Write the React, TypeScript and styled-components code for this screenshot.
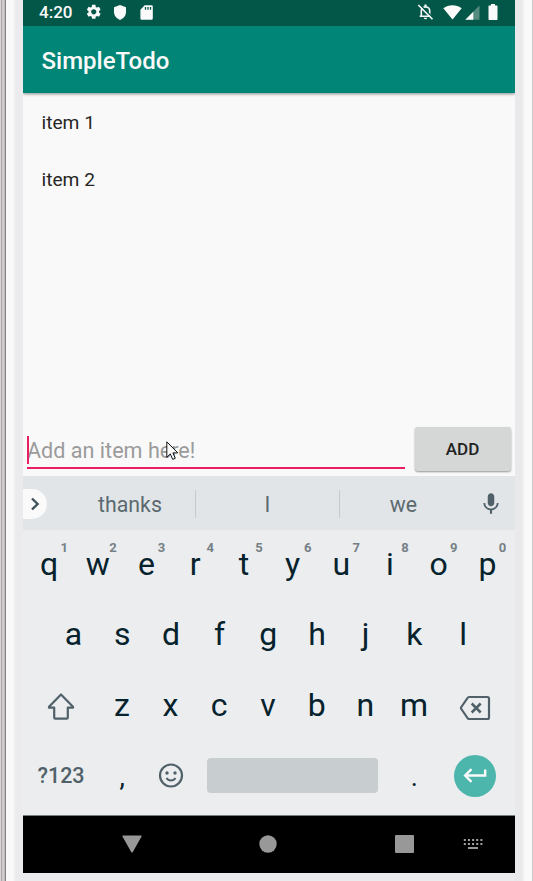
import React from "react";
import styled, { createGlobalStyle } from "styled-components";
import { MdSettings, MdMic, MdKeyboardReturn } from "react-icons/md";

const GlobalStyle = createGlobalStyle`
  html, body { margin: 0; padding: 0; }
  body { background: #f9f9f9; overflow: hidden; font-family: Roboto, "Liberation Sans", sans-serif; }
  * { box-sizing: border-box; }
`;

const Frame = styled.div`
  display: flex;
  width: 533px;
  height: 881px;
  overflow: hidden;
`;

const LeftEdge = styled.div`
  flex: none;
  width: 23px;
  background: linear-gradient(
    to right,
    #dcd8da 0 1px,
    #a9a5a7 1px 2px,
    #d0cbce 2px 4px,
    #c0bbbd 4px 5px,
    #858183 5px 6px,
    #f9f9f9 6px 14px,
    #efeff1 14px 16px,
    #ebebed 16px 23px
  );
`;

const RightEdge = styled.div`
  flex: none;
  width: 18px;
  background: linear-gradient(
    to right,
    #e9e9eb 0 7px,
    #efeff0 7px 9px,
    #f9f9f9 9px 17px,
    #c9c9c9 17px 18px
  );
`;

const Screen = styled.main`
  width: 492px;
  display: flex;
  flex-direction: column;
  background: #ebebed;
`;

const StatusBar = styled.header`
  height: 26px;
  flex: none;
  display: flex;
  justify-content: space-between;
  background: #025748;
  color: #fafafa;
  padding: 0 17.5px 0 16px;
`;

const StatusGroup = styled.div`
  display: flex;
  align-items: center;
  height: 24px;
`;

const Clock = styled.span`
  width: 46px;
  font-size: 17px;
  font-weight: 500;
  line-height: 24px;
`;

const Glyph = styled.svg<{ $gap?: number; $drop?: number }>`
  flex: none;
  display: block;
  margin-left: ${(p) => p.$gap ?? 0}px;
  margin-top: ${(p) => p.$drop ?? 0}px;
`;

const AppBar = styled.div`
  height: 67px;
  flex: none;
  padding-left: 18.5px;
  background: #018576;
  color: #fafafa;
  font-size: 24px;
  font-weight: 500;
  line-height: 70px;
  box-shadow: 0 1px 3px rgba(0, 0, 0, 0.45);
  z-index: 1;
  clip-path: inset(0 0 -6px 0);
`;

const Content = styled.section`
  height: 383px;
  flex: none;
  display: flex;
  flex-direction: column;
  background: #f9f9f9;
`;

const List = styled.ul`
  flex: 1;
  list-style: none;
  margin: 0;
  padding: 0.5px 0 0 18.5px;
`;

const Item = styled.li`
  height: 57.5px;
  line-height: 57.5px;
  font-size: 19.2px;
  color: #262626;
`;

const Entry = styled.div`
  display: flex;
  height: 50px;
  padding-left: 4px;
`;

const Field = styled.div`
  position: relative;
  width: 378px;
  height: 43px;
  border-bottom: 2px solid #e91e63;
  color: #9b9b9b;
  font-size: 21.6px;
  line-height: 50px;
  white-space: nowrap;
`;

const Caret = styled.i`
  position: absolute;
  left: 0;
  top: 10px;
  width: 2px;
  height: 28px;
  background: #e91e63;
`;

const Pointer = styled.svg`
  position: absolute;
  left: 139px;
  top: 15px;
`;

const AddButton = styled.button`
  margin: 1px 0 0 9.5px;
  width: 96px;
  height: 44px;
  padding: 0 0 1px;
  border: 0;
  border-radius: 3px;
  background: #d5d7d6;
  box-shadow: 0 1px 2px rgba(0, 0, 0, 0.4);
  color: #222;
  font: 500 17px Roboto, sans-serif;
`;

const Suggestions = styled.div`
  height: 53.5px;
  flex: none;
  display: flex;
  align-items: center;
  background: #e1e5e8;
  color: #5b696f;
  font-size: 21.3px;
`;

const Expand = styled.div`
  flex: none;
  width: 24px;
  height: 30px;
  margin-top: 2px;
  display: flex;
  align-items: center;
  padding-left: 7px;
  border-radius: 0 15px 15px 0;
  background: #fafafa;
`;

const Suggestion = styled.span<{ $width: number; $shift?: number; $divided?: boolean }>`
  flex: none;
  width: ${(p) => p.$width}px;
  height: 28px;
  margin-top: 1.5px;
  padding-left: ${(p) => p.$shift ?? 0}px;
  line-height: 29.5px;
  text-align: center;
  border-right: ${(p) => (p.$divided ? "1px solid #c3c9cc" : "0")};
`;

const Mic = styled.span`
  display: flex;
  margin-left: 11px;
  margin-top: 2px;
  color: #50616a;
`;

const Keyboard = styled.section`
  height: 286.5px;
  flex: none;
  padding-left: 1.7px;
  background: #ebedef;
  border-bottom: 1px solid #777e80;
`;

const KeyRow = styled.div<{ $indent?: number }>`
  display: flex;
  height: 70.3px;
  padding-left: ${(p) => p.$indent ?? 0}px;
`;

const Key = styled.div<{ $width?: number }>`
  position: relative;
  width: ${(p) => p.$width ?? 48.7}px;
  height: 70.3px;
  display: flex;
  align-items: center;
  justify-content: center;
  color: #06222c;
  font-size: 32px;
  line-height: 70px;
`;

const LetterKey = styled(Key)`
  height: 69px;
  padding-left: 0.3px;
`;

const Hint = styled.sup`
  position: absolute;
  left: 34.5px;
  top: 10px;
  width: 10px;
  text-align: center;
  color: #758086;
  font-size: 13px;
  font-weight: 700;
  line-height: 16px;
`;

const ModeKey = styled(Key)`
  color: #50616a;
  font-size: 21.5px;
  font-weight: 500;
  line-height: 68px;
`;

const Punctuation = styled(Key)`
  font-size: 27px;
  padding: 3px 0 0 1px;
`;

const SpaceBar = styled.span`
  width: 171px;
  height: 35px;
  border-radius: 4px;
  background: #c8cdd0;
`;

const EnterDisc = styled.span`
  width: 42px;
  height: 42px;
  margin-left: 1px;
  display: grid;
  place-items: center;
  border-radius: 50%;
  background: #4db6ac;
  color: #fafafa;
`;

const NavBar = styled.nav`
  height: 57px;
  flex: none;
  display: flex;
  align-items: center;
  padding-bottom: 1.5px;
  background: #000;
`;

const numbers = "1234567890";

function Letters({ text, hints }: { text: string; hints?: string }) {
  return (
    <>
      {text.split("").map((c, i) => (
        <LetterKey key={c}>
          {c}
          {hints && <Hint>{hints[i]}</Hint>}
        </LetterKey>
      ))}
    </>
  );
}

export default function App() {
  return (
    <>
      <GlobalStyle />
      <Frame>
        <LeftEdge />
        <Screen>
          <StatusBar>
            <StatusGroup>
              <Clock>4:20</Clock>
              <MdSettings size={17.5} />
              <Glyph $gap={10.5} width="14" height="15" viewBox="0 0 14 15">
                <path d="M7 0 13 2.2V7c0 3.6-2.4 6.6-6 7.9C3.4 13.6 1 10.6 1 7V2.2z" fill="currentColor" />
              </Glyph>
              <Glyph $gap={13} width="13" height="15" viewBox="0 0 13 15">
                <path d="M4.7.2H11.5A1.3 1.3 0 0 1 12.8 1.5V13.5A1.3 1.3 0 0 1 11.5 14.8H1.7A1.3 1.3 0 0 1 .4 13.5V4.7z" fill="currentColor" />
                <path d="M5.5 2V4.7M8 2V4.7M10.5 2V4.7" stroke="#025748" strokeWidth="1.3" />
              </Glyph>
            </StatusGroup>
            <StatusGroup>
              <Glyph width="17" height="18" viewBox="0 0 17 18">
                <path d="M4.3 13.3V8C4.3 5.5 5.6 4 8.5 4s4.2 1.5 4.2 4v5.3M2.7 13.3H14.3" fill="none" stroke="currentColor" strokeWidth="1.6" />
                <path d="M8.5 1.5V4" stroke="currentColor" strokeWidth="2.2" />
                <path d="M6.9 14.7H10.1A1.6 1.6 0 0 1 6.9 14.7z" fill="currentColor" />
                <path d="M2.5 1.3 16.7 15.5" stroke="#025748" strokeWidth="1.5" />
                <path d="M1.3 2 15.5 16.3" stroke="currentColor" strokeWidth="1.6" />
              </Glyph>
              <Glyph $gap={9.5} width="19" height="15" viewBox="0 0 19 15">
                <path d="M.3 3.2C5.5-.7 13.5-.7 18.7 3.2L9.5 14.6z" fill="currentColor" />
              </Glyph>
              <Glyph $gap={2.5} width="15" height="15" viewBox="0 0 15 15">
                <path d="M14.5.5V14.7H.3z" fill="#568b7f" />
                <path d="M8.3 6.7V14.7H.3z" fill="currentColor" />
              </Glyph>
              <Glyph $gap={8} width="10" height="16" viewBox="0 0 10 16">
                <path d="M3 0H7V1.5H8.8Q9.5 1.5 9.5 2.2V15.2Q9.5 16 8.8 16H1.2Q.5 16 .5 15.2V2.2Q.5 1.5 1.2 1.5H3z" fill="currentColor" />
              </Glyph>
            </StatusGroup>
          </StatusBar>

          <AppBar>SimpleTodo</AppBar>

          <Content>
            <List>
              <Item>item 1</Item>
              <Item>item 2</Item>
            </List>
            <Entry>
              <Field>
                Add an item here!
                <Caret />
                <Pointer width="13" height="20" viewBox="0 0 13 20">
                  <path d="M.8.8V16.3L4.3 12.9 6.7 18.4 9.3 17.3 6.9 11.9H11.8z" fill="#fafafa" stroke="#111" strokeWidth="1" />
                </Pointer>
              </Field>
              <AddButton>ADD</AddButton>
            </Entry>
          </Content>

          <Suggestions>
            <Expand>
              <Glyph width="11" height="14" viewBox="0 0 11 14">
                <path d="M2 1.5 7.6 7 2 12.5" fill="none" stroke="#40525b" strokeWidth="2.4" />
              </Glyph>
            </Expand>
            <Suggestion $width={149} $shift={18} $divided>thanks</Suggestion>
            <Suggestion $width={144} $divided>I</Suggestion>
            <Suggestion $width={127}>we</Suggestion>
            <Mic><MdMic size={26} /></Mic>
          </Suggestions>

          <Keyboard>
            <KeyRow><Letters text="qwertyuiop" hints={numbers} /></KeyRow>
            <KeyRow $indent={24.4}><Letters text="asdfghjkl" /></KeyRow>
            <KeyRow>
              <Key $width={72.7}>
                <Glyph $drop={2} width="28" height="28" viewBox="0 0 28 28">
                  <path d="M14 2.5 26 14.7V15.7H20.8V25.5Q20.8 26.6 19.7 26.6H8.3Q7.2 26.6 7.2 25.5V15.7H2V14.7z" fill="none" stroke="#50616a" strokeWidth="2.2" strokeLinejoin="round" />
                </Glyph>
              </Key>
              <Letters text="zxcvbnm" />
              <Key $width={73}>
                <Glyph $drop={5} width="32" height="26" viewBox="0 0 32 26">
                  <path d="M10 2H28.5Q30 2 30 3.5V22.5Q30 24 28.5 24H10Q9 24 8.5 23L2 13.5V12.5L8.5 3Q9 2 10 2z" fill="none" stroke="#50616a" strokeWidth="2.2" />
                  <path d="M12.7 8.5 21.7 17.5M21.7 8.5 12.7 17.5" stroke="#50616a" strokeWidth="2.5" />
                </Glyph>
              </Key>
            </KeyRow>
            <KeyRow>
              <ModeKey $width={72.7}>?123</ModeKey>
              <Punctuation>,</Punctuation>
              <Key>
                <Glyph $gap={1} width="26" height="26" viewBox="0 0 26 26">
                  <circle cx="13" cy="12.5" r="11" fill="none" stroke="#50616a" strokeWidth="2.2" />
                  <circle cx="9" cy="10" r="1.7" fill="#50616a" />
                  <circle cx="17" cy="10" r="1.7" fill="#50616a" />
                  <path d="M8.5 15Q10 17.5 13 17.5T17.5 15" fill="none" stroke="#50616a" strokeWidth="2" />
                </Glyph>
              </Key>
              <Key $width={194.8}><SpaceBar /></Key>
              <Punctuation>.</Punctuation>
              <Key $width={73}>
                <EnterDisc><MdKeyboardReturn size={29} /></EnterDisc>
              </Key>
            </KeyRow>
          </Keyboard>

          <NavBar>
            <Glyph $gap={99} width="20" height="18" viewBox="0 0 20 18">
              <path d="M1 .5H19Q20 .5 19.5 1.5L10.8 17Q10 18 9.2 17L.5 1.5Q0 .5 1 .5z" fill="#989898" />
            </Glyph>
            <Glyph $gap={117} width="18" height="18" viewBox="0 0 18 18">
              <circle cx="9" cy="9" r="8.7" fill="#989898" />
            </Glyph>
            <Glyph $gap={118} width="19" height="18" viewBox="0 0 19 18">
              <rect width="19" height="18" rx="1" fill="#989898" />
            </Glyph>
            <Glyph $gap={49} width="20" height="12" viewBox="0 0 20 12">
              <path d="M.8 2H19.5M.8 6H19.5" stroke="#a4a4a4" strokeWidth="2" strokeDasharray="2 2.15" />
              <path d="M5 10H15" stroke="#989898" strokeWidth="2" />
            </Glyph>
          </NavBar>
        </Screen>
        <RightEdge />
      </Frame>
    </>
  );
}
